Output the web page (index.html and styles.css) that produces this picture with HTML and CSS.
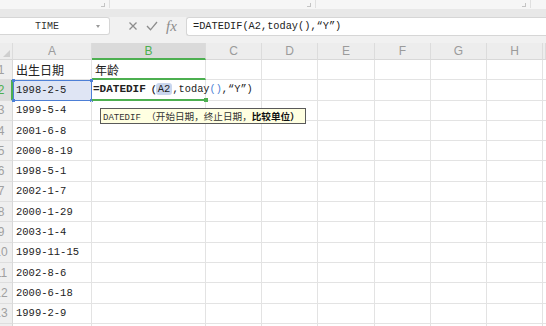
FILE: index.html
```html
<!DOCTYPE html>
<html lang="zh">
<head>
<meta charset="utf-8">
<title>DATEDIF</title>
<link rel="stylesheet" href="styles.css">
</head>
<body>
<div class="page">
  <div class="ribbon">
    <span class="mk mk1"></span><span class="sep sep1"></span>
    <span class="mk mk2"></span><span class="sep sep2"></span>
    <span class="mk mk3"></span><span class="sep sep3"></span>
  </div>
  <div class="band"></div>
  <div class="fbar">
    <div class="namebox"><span class="nm">TIME</span><span class="dd"></span></div>
    <div class="ficons">
      <svg class="ic-x" width="10" height="10" viewBox="0 0 10 10"><path d="M1.5 1.5 L8.5 8.5 M8.5 1.5 L1.5 8.5" stroke="#8c8c8c" stroke-width="1.3" fill="none"/></svg>
      <svg class="ic-ok" width="12" height="10" viewBox="0 0 12 10"><path d="M1 5 L4.5 8.8 L11 1" stroke="#8c8c8c" stroke-width="1.3" fill="none"/></svg>
      <span class="fx">fx</span>
    </div>
    <div class="finput">=DATEDIF(A2,today(),“Y”)</div>
  </div>
  <div class="sheet">
    <div class="ch corner"><span class="tri"></span></div>
    <div class="ch">A</div><div class="ch act">B</div><div class="ch">C</div><div class="ch">D</div><div class="ch">E</div><div class="ch">F</div><div class="ch">G</div><div class="ch">H</div><div class="ch"></div>

    <div class="rh"><span>1</span></div>
    <div class="c cn">出生日期</div><div class="c cn b1">年龄</div><div class="c"></div><div class="c"></div><div class="c"></div><div class="c"></div><div class="c"></div><div class="c"></div><div class="c"></div>

    <div class="rh ract"><span>2</span></div>
    <div class="c sel">1998-2-5<i class="h h1"></i><i class="h h2"></i><i class="h h3"></i><i class="h h4"></i></div>
    <div class="c b2"><span class="fb">=DATEDIF</span><span class="fp">（</span><span class="ref">A2</span><span class="fr">,today<span class="bl">()</span>,“Y”)</span><i class="gh"></i></div>
    <div class="c"></div><div class="c"></div><div class="c"></div><div class="c"></div><div class="c"></div><div class="c"></div><div class="c"></div>

    <div class="rh"><span>3</span></div>
    <div class="c">1999-5-4</div><div class="c"></div><div class="c"></div><div class="c"></div><div class="c"></div><div class="c"></div><div class="c"></div><div class="c"></div><div class="c"></div>

    <div class="rh"><span>4</span></div>
    <div class="c">2001-6-8</div><div class="c"></div><div class="c"></div><div class="c"></div><div class="c"></div><div class="c"></div><div class="c"></div><div class="c"></div><div class="c"></div>

    <div class="rh"><span>5</span></div>
    <div class="c">2000-8-19</div><div class="c"></div><div class="c"></div><div class="c"></div><div class="c"></div><div class="c"></div><div class="c"></div><div class="c"></div><div class="c"></div>

    <div class="rh"><span>6</span></div>
    <div class="c">1998-5-1</div><div class="c"></div><div class="c"></div><div class="c"></div><div class="c"></div><div class="c"></div><div class="c"></div><div class="c"></div><div class="c"></div>

    <div class="rh"><span>7</span></div>
    <div class="c">2002-1-7</div><div class="c"></div><div class="c"></div><div class="c"></div><div class="c"></div><div class="c"></div><div class="c"></div><div class="c"></div><div class="c"></div>

    <div class="rh"><span>8</span></div>
    <div class="c">2000-1-29</div><div class="c"></div><div class="c"></div><div class="c"></div><div class="c"></div><div class="c"></div><div class="c"></div><div class="c"></div><div class="c"></div>

    <div class="rh"><span>9</span></div>
    <div class="c">2003-1-4</div><div class="c"></div><div class="c"></div><div class="c"></div><div class="c"></div><div class="c"></div><div class="c"></div><div class="c"></div><div class="c"></div>

    <div class="rh"><span>10</span></div>
    <div class="c">1999-11-15</div><div class="c"></div><div class="c"></div><div class="c"></div><div class="c"></div><div class="c"></div><div class="c"></div><div class="c"></div><div class="c"></div>

    <div class="rh"><span>11</span></div>
    <div class="c">2002-8-6</div><div class="c"></div><div class="c"></div><div class="c"></div><div class="c"></div><div class="c"></div><div class="c"></div><div class="c"></div><div class="c"></div>

    <div class="rh"><span>12</span></div>
    <div class="c">2000-6-18</div><div class="c"></div><div class="c"></div><div class="c"></div><div class="c"></div><div class="c"></div><div class="c"></div><div class="c"></div><div class="c"></div>

    <div class="rh"><span>13</span></div>
    <div class="c">1999-2-9</div><div class="c"></div><div class="c"></div><div class="c"></div><div class="c"></div><div class="c"></div><div class="c"></div><div class="c"></div><div class="c"></div>

    <div class="rh"><span>14</span></div>
    <div class="c"></div><div class="c"></div><div class="c"></div><div class="c"></div><div class="c"></div><div class="c"></div><div class="c"></div><div class="c"></div><div class="c"></div>
  </div>
  <div class="tip">DATEDIF <span class="cj">（开始日期，终止日期，</span><b class="cj">比较单位）</b></div>
</div>
</body>
</html>
```
FILE: styles.css
```css
html, body {
  margin: 0;
  padding: 0;
  background: #ffffff;
}
.page {
  position: relative;
  width: 546px;
  height: 326px;
  overflow: hidden;
  font-family: "Liberation Mono", "Noto Sans CJK SC", monospace;
  color: #222;
}
.ribbon {
  height: 9px;
  background: #f6f6f6;
  display: flex;
  align-items: flex-start;
}
.mk {
  width: 3px;
  height: 3px;
  margin-top: 3px;
  border-right: 1px solid #c4c4c4;
  border-bottom: 1px solid #c4c4c4;
}
.sep {
  width: 1px;
  height: 8px;
  background: #e0e0e0;
  margin-left: 4px;
}
.mk1 { margin-left: 101px; }
.mk2 { margin-left: 197px; }
.mk3 { margin-left: 206px; }
.band {
  height: 8px;
  background: #e8e8e8;
}
.fbar {
  height: 26px;
  background: #f1f1f1;
  display: flex;
  align-items: flex-start;
}
.namebox {
  box-sizing: border-box;
  width: 110px;
  height: 18px;
  background: #fff;
  border: 1px solid #d6d6d6;
  border-left: none;
  border-radius: 0 3px 3px 0;
  display: flex;
  align-items: center;
}
.nm {
  width: 94px;
  text-align: center;
  font-size: 10px;
  color: #333;
}
.dd {
  margin-left: 2px;
  width: 0;
  height: 0;
  border-left: 2px solid transparent;
  border-right: 2px solid transparent;
  border-top: 3px solid #9a9a9a;
}
.ficons {
  width: 76px;
  height: 18px;
  display: flex;
  align-items: center;
}
.ic-x { margin-left: 18px; }
.ic-ok { margin-left: 8px; }
.fx {
  margin-left: 8px;
  font-family: "Liberation Serif", serif;
  font-style: italic;
  font-size: 15px;
  color: #8c8c8c;
  line-height: 18px;
}
.finput {
  box-sizing: border-box;
  flex: 1;
  height: 19px;
  background: #fff;
  border: 1px solid #d6d6d6;
  border-right: none;
  border-radius: 3px 0 0 3px;
  padding-left: 6px;
  font-size: 10.3px;
  line-height: 17px;
  color: #222;
  white-space: nowrap;
}
.sheet {
  display: grid;
  grid-template-columns: 13px 79px 114px 56px 56px 57px 56px 56px 56px 3px;
  grid-template-rows: 17px repeat(13, 20.31px) 20px;
}
.ch {
  box-sizing: border-box;
  background: #ededed;
  border-right: 1px solid #dcdcdc;
  border-bottom: 1px solid #d8d8d8;
  font-family: "Liberation Sans", sans-serif;
  font-size: 12px;
  color: #9b9b9b;
  display: flex;
  align-items: center;
  justify-content: center;
}
.ch.act {
  background: #dadada;
  color: #4caf50;
  border-bottom: 2px solid #4caf50;
}
.corner { position: relative; }
.tri {
  position: absolute;
  right: 2px;
  bottom: 2px;
  width: 0;
  height: 0;
  border-left: 7px solid transparent;
  border-bottom: 7px solid #cfcfcf;
}
.rh {
  box-sizing: border-box;
  background: #efefef;
  border-right: 1px solid #d8d8d8;
  border-bottom: 1px solid #dedede;
  overflow: hidden;
  display: flex;
  align-items: center;
  font-family: "Liberation Sans", sans-serif;
  font-size: 12px;
  color: #a0a0a0;
}
.rh span {
  flex: none;
  width: 26px;
  margin-left: -12px;
  text-align: center;
}
.rh.ract {
  background: #dcdcdc;
  color: #4caf50;
  border-right: 2px solid #4caf50;
}
.c {
  position: relative;
  box-sizing: border-box;
  border-right: 1px solid #e3e3e3;
  border-bottom: 1px solid #e3e3e3;
  padding-left: 3px;
  display: flex;
  align-items: center;
  white-space: nowrap;
  font-size: 10.5px;
  color: #222;
}
.cn {
  font-family: "Noto Sans CJK SC", sans-serif;
  font-size: 12px;
}
.b1 {
  border-bottom: 2px solid #4caf50;
}
.sel {
  background: #dfe5f4;
  border: 1px solid #4d7fd6;
  padding-left: 2px;
}
.h {
  position: absolute;
  width: 3px;
  height: 3px;
  background: #4d7fd6;
}
.h1 { left: -2px; top: -2px; }
.h2 { right: -2px; top: -2px; }
.h3 { left: -2px; bottom: -2px; }
.h4 { right: -2px; bottom: -2px; }
.b2 {
  overflow: visible;
  padding-left: 1px;
  border-bottom: 2px solid #4caf50;
  z-index: 2;
}
.fb {
  font-weight: bold;
  font-size: 11px;
}
.fp {
  font-family: "Noto Sans CJK SC", sans-serif;
  font-weight: bold;
  font-size: 10px;
}
.ref {
  background: #c9d6ee;
  border-radius: 3px;
  padding: 0 2px;
  font-size: 10.5px;
}
.fr {
  font-size: 10.3px;
}
.bl { color: #4d7fd6; }
.gh {
  position: absolute;
  right: -3px;
  bottom: -3px;
  width: 4px;
  height: 4px;
  background: #4caf50;
}
.tip {
  position: absolute;
  left: 100px;
  top: 108px;
  box-sizing: border-box;
  width: 206px;
  height: 16px;
  background: #ffffe1;
  border: 1px solid #5a5a5a;
  padding-left: 2px;
  font-size: 9px;
  line-height: 14px;
  color: #333;
  white-space: nowrap;
  z-index: 3;
}
.cj {
  font-family: "Noto Sans CJK SC", sans-serif;
  font-size: 9.6px;
}
.tip b {
  font-weight: bold;
  color: #111;
}
```
